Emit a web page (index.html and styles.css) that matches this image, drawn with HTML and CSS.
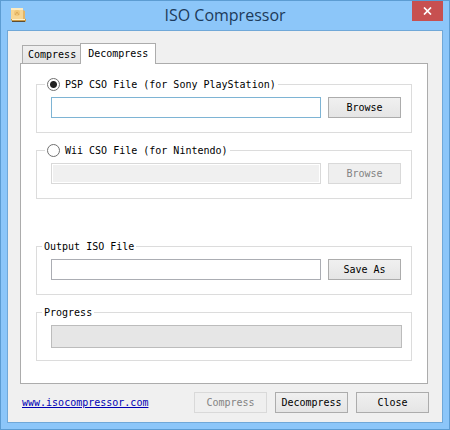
FILE: index.html
```
<!DOCTYPE html>
<html lang="en">
<head>
  <meta charset="UTF-8">
  <meta name="viewport" content="width=device-width, initial-scale=1.0">
  <title>ISO Compressor</title>
  <link rel="stylesheet" href="styles.css">
</head>
<body>
  <div class="window">
    <header class="titlebar">
      <svg class="app-icon" width="16" height="16" viewBox="0 0 16 16" aria-hidden="true">
        <path d="M1 1h12v10l3 1v2l-1 1H3l-2-2z" fill="#c99a48"/>
        <path d="M1 1h12v11H1z" fill="#f6d694"/>
        <path d="M1 1h12v2H1z" fill="#fdebc0"/>
        <path d="M13 3l2 1v8h-2z" fill="#e3b566"/>
        <path d="M2 12h13v1H2z" fill="#fff0c8"/>
        <path d="M2 14h13v1H2z" fill="#5d4d33"/>
        <circle cx="7" cy="6" r="3" fill="#f0c777"/>
        <path d="M5 8l2-3 2 3" fill="none" stroke="#dba85a"/>
      </svg>
      <h1 class="title">ISO Compressor</h1>
      <button class="close-btn" type="button" aria-label="Close window">
        <svg width="9" height="8" viewBox="0 0 9 8"><path d="M1 .5l7 7M8 .5l-7 7" fill="none" stroke="#fff" stroke-width="1.7"/></svg>
      </button>
    </header>

    <main class="client">
      <div class="tabs" role="tablist">
        <button class="tab" type="button" role="tab" aria-selected="false">Compress</button>
        <button class="tab active" type="button" role="tab" aria-selected="true">Decompress</button>
      </div>

      <div class="panel" role="tabpanel">
        <fieldset class="group">
          <legend class="radio-legend"><label><input class="radio" type="radio" name="source" checked>PSP CSO File (for Sony PlayStation)</label></legend>
          <div class="row">
            <input class="field focus" type="text" aria-label="PSP CSO file">
            <button class="btn" type="button">Browse</button>
          </div>
        </fieldset>

        <fieldset class="group">
          <legend class="radio-legend"><label><input class="radio" type="radio" name="source">Wii CSO File (for Nintendo)</label></legend>
          <div class="row">
            <input class="field" type="text" aria-label="Wii CSO file" disabled>
            <button class="btn" type="button" disabled>Browse</button>
          </div>
        </fieldset>

        <fieldset class="group output">
          <legend><label for="output">Output ISO File</label></legend>
          <div class="row">
            <input class="field" type="text" id="output">
            <button class="btn" type="button">Save As</button>
          </div>
        </fieldset>

        <fieldset class="group progress">
          <legend>Progress</legend>
          <div class="row">
            <div class="bar" role="progressbar" aria-label="Progress" aria-valuenow="0"></div>
          </div>
        </fieldset>
      </div>

      <footer class="actions">
        <a class="site" href="#">www.isocompressor.com</a>
        <button class="btn" type="button" disabled>Compress</button>
        <button class="btn" type="button">Decompress</button>
        <button class="btn" type="button">Close</button>
      </footer>
    </main>
  </div>
</body>
</html>
```
FILE: styles.css
```
* {
  box-sizing: border-box;
  margin: 0;
  padding: 0;
}

body,
button,
input {
  font-family: "DejaVu Sans Mono", monospace;
  font-size: 10px;
  line-height: 15px;
  color: #000;
}

.window {
  display: flex;
  flex-direction: column;
  min-height: 100vh;
  padding: 0 6px 6px;
  border: 1px solid #5c9cd2;
  background: #8cc6f9;
}

/* title bar */
.titlebar {
  display: grid;
  grid-template-columns: 1fr auto 1fr;
  height: 29px;
}

.app-icon {
  margin: 6px 0 0 3px;
}

.title {
  font-family: "Open Sans", sans-serif;
  font-size: 16px;
  font-weight: normal;
  line-height: 29px;
  color: #1c3a5a;
}

.close-btn {
  display: flex;
  align-items: center;
  justify-content: center;
  justify-self: end;
  width: 31px;
  height: 20px;
  border: none;
  background: #c75050;
}

.client {
  flex: 1;
  padding: 12px 14px 9px 12px;
  border: 1px solid #70a8d8;
  background: #f0f0f0;
}

/* tabs */
.tabs {
  display: flex;
  align-items: flex-end;
  padding-left: 2px;
}

.tab {
  height: 18px;
  padding: 0 5px;
  border: 1px solid #acacac;
  border-bottom: none;
  background: linear-gradient(#f0f0f0, #e5e5e5);
}

.tab.active {
  position: relative;
  height: 21px;
  margin-bottom: -1px;
  margin-left: -2px;
  padding: 0 7px 1px;
  background: #fff;
}

.panel {
  padding: 13px 15px 22px;
  border: 1px solid #acacac;
  background: #fff;
}

/* group boxes */
.group {
  min-width: 0;
  padding: 0 10px 14px 5px;
  border: 1px solid #dcdcdc;
}

.group + .group {
  margin-top: 10px;
}

.group + .output {
  margin-top: 40px;
}

.progress {
  padding: 0 9px 12px 5px;
}

legend {
  height: 15px;
  padding: 0 2px;
}

.radio-legend {
  margin-left: 3px;
}

.radio-legend label {
  display: flex;
  align-items: center;
  gap: 5px;
}

.radio {
  appearance: none;
  width: 13px;
  height: 13px;
  border: 1px solid #707070;
  border-radius: 50%;
  background: #fff;
}

.radio:checked {
  background: radial-gradient(circle, #222 3px, #fff 4px);
}

.row {
  display: flex;
  gap: 7px;
  padding: 5px 0 0 9px;
}

.field {
  flex: 1;
  min-width: 0;
  height: 21px;
  padding: 0 4px;
  border: 1px solid #abadb3;
  background: #fff;
  outline: none;
}

.field.focus {
  border-color: #7eb4d4;
}

.field:disabled {
  border-color: #d9d9d9;
  background: #f0f0f0;
  box-shadow: inset 0 0 0 1px #fff;
}

.btn {
  width: 73px;
  height: 21px;
  border: 1px solid #acacac;
  background: linear-gradient(#f0f0f0, #e5e5e5);
}

.btn:disabled {
  border-color: #d9d9d9;
  background: #efefef;
  color: #838383;
}

.bar {
  flex: 1;
  height: 23px;
  border: 1px solid #bcbcbc;
  background: #e6e6e6;
}

/* bottom row */
.actions {
  display: flex;
  gap: 8px;
  margin: 8px -1px 0 2px;
}

.site {
  margin-right: auto;
  line-height: 21px;
  color: #0000b4;
}
```
